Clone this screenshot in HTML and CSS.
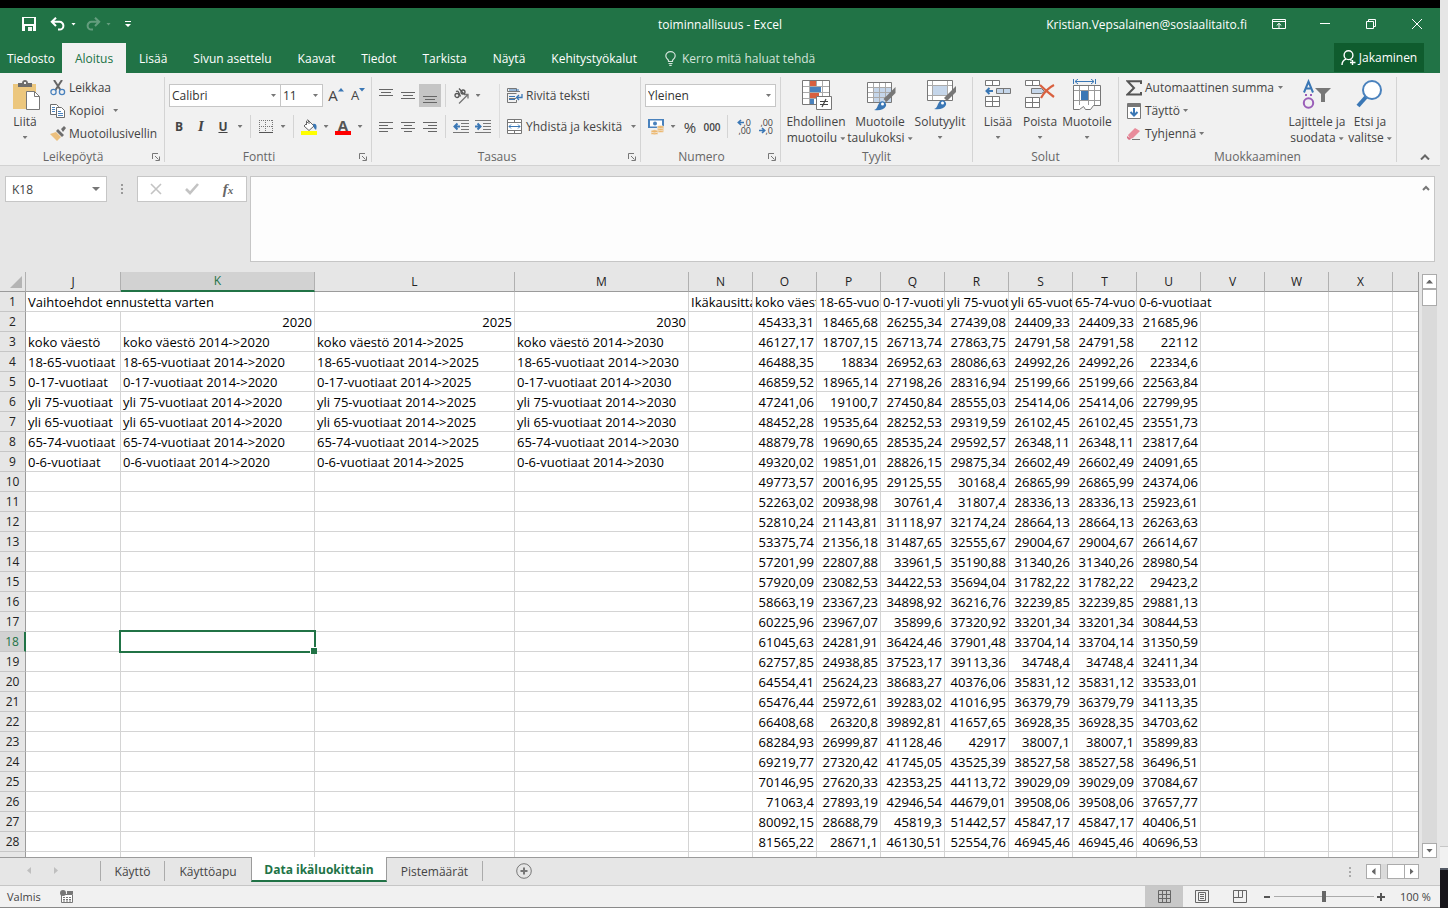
FILE: index.html
```html
<!DOCTYPE html>
<html lang="fi">
<head>
<meta charset="utf-8">
<title>toiminnallisuus - Excel</title>
<link rel="stylesheet" href="styles.css">
</head>
<body>
<div class="desktop">
<div class="app">
  <header class="titlebar">
    <div class="quick">
      <button class="qbtn" aria-label="Tallenna"><svg width="14" height="14" viewBox="0 0 14 14" shape-rendering="crispEdges"><path d="M0 0h14v14H0z" fill="#fff"/><path d="M2 1h10v6H2zM3 9h8v5H3z" fill="#217346"/><path d="M4 11h2v2H4zM6 10h4v4H6z" fill="#fff" opacity=".95"/><path d="M4 11h2v2H4z" fill="#217346"/></svg></button>
      <button class="qbtn" aria-label="Kumoa"><svg width="16" height="14" viewBox="0 0 16 14" fill="none" stroke="#fff" stroke-width="2"><path d="M6 .7L1.8 4.8 6 9M2 4.8h7.500a3.900 3.900 0 0 1 0 7.800H8"/></svg></button><span class="caret light"></span>
      <button class="qbtn dim" aria-label="Tee uudelleen"><svg width="16" height="14" viewBox="0 0 16 14" fill="none" stroke="#fff" stroke-width="2"><path d="M10 .7l4.200 4.100L10 9M14 4.800H6.500a3.900 3.900 0 0 0 0 7.800H8"/></svg></button><span class="caret light dim"></span>
      <button class="qbtn custom" aria-label="Mukauta"><svg width="6" height="6" viewBox="0 0 6 6"><path d="M0 0h6v1H0zM0 3h6L3 6z" fill="#fff"/></svg></button>
    </div>
    <h1 class="title">toiminnallisuus - Excel</h1>
    <div class="account">
      <span class="user">Kristian.Vepsalainen@sosiaalitaito.fi</span>
      <button class="winbtn" aria-label="Valintanauhan asetukset"><svg width="14" height="11" viewBox="0 0 14 11" fill="none" stroke="#fff"><path d="M.5.500h13v9H.500zM1 2.500h12M7 9V4.500M4.700 6.500L7 4.300l2.300 2.200"/></svg></button>
      <button class="winbtn" aria-label="Pienennä"><svg width="10" height="10" viewBox="0 0 10 10" stroke="#fff"><path d="M0 4.500h10"/></svg></button>
      <button class="winbtn" aria-label="Palauta"><svg width="10" height="10" viewBox="0 0 10 10" fill="none" stroke="#fff"><path d="M.5 2.500h7v7h-7zM2.500 2V.500h7v7H8"/></svg></button>
      <button class="winbtn" aria-label="Sulje"><svg width="10" height="10" viewBox="0 0 10 10" stroke="#fff"><path d="M0 0l10 10M10 0L0 10"/></svg></button>
    </div>
  </header>

  <nav class="tabs">
    <button class="tab file">Tiedosto</button>
    <button class="tab active">Aloitus</button>
    <button class="tab">Lisää</button>
    <button class="tab">Sivun asettelu</button>
    <button class="tab">Kaavat</button>
    <button class="tab">Tiedot</button>
    <button class="tab">Tarkista</button>
    <button class="tab">Näytä</button>
    <button class="tab">Kehitystyökalut</button>
    <button class="tab tell"><svg width="11" height="15" viewBox="0 0 11 15" fill="none" stroke="#d3e3da" stroke-width="1.200"><path d="M3.500 10.500V9.300C2 8 .8 7 .8 4.900a4.700 4.300 0 0 1 9.400 0C10.200 7 9 8 7.500 9.300v1.200zM3.500 12.500h4M4.300 14.300h2.400"/></svg>Kerro mitä haluat tehdä</button>
    <button class="share"><svg width="15" height="16" viewBox="0 0 15 16" fill="none" stroke="#fff" stroke-width="1.400"><circle cx="7.500" cy="5.200" r="4.400"/><path d="M1 15c0-3 1.500-4.800 4-5.800M9 9.300l1.500 1M11.500 10v5M9 12.500h5.500"/></svg>Jakaminen</button>
  </nav>

  <section class="ribbon">
    <div class="group g-clip">
      <div class="gbody">
        <button class="big paste"><svg class="bigicon" width="32" height="32" viewBox="0 0 32 32"><path d="M4 5h23v25H4z" fill="#ecc77e"/><path d="M9 8V4h4c0-4 6-4 6 0h4v4z" fill="#6d6d6d"/><path d="M15 3h2v2h-2z" fill="#f1f1f1"/><path d="M17.500 12.500h8l5 5v13h-13z" fill="#fff" stroke="#777"/><path d="M25.500 12.500v5h5" fill="none" stroke="#777"/></svg><span>Liitä</span><i class="caret"></i></button>
        <div class="list">
          <button class="item"><svg width="16" height="16" viewBox="0 0 16 16" fill="none"><path d="M4 0l6.500 10M12 0L5.500 10" stroke="#666" stroke-width="2"/><circle cx="3.500" cy="12" r="2.600" stroke="#4a82bd" stroke-width="1.300"/><circle cx="12" cy="12" r="2.600" stroke="#4a82bd" stroke-width="1.300"/></svg>Leikkaa</button>
          <button class="item"><svg width="16" height="16" viewBox="0 0 16 16" fill="#fff" stroke="#6d6d6d"><path d="M.5 1.500h6l2 2v8h-8z"/><path d="M6.500 4.500h5l3 3v7h-8z"/><path d="M2 4.500h3M2 6.500h3M2 8.500h3M8 8.500h3M8 10.500h5M8 12.500h5" stroke="#4a82bd"/></svg>Kopioi <i class="caret push"></i></button>
          <button class="item"><svg width="16" height="16" viewBox="0 0 16 16"><path d="M0 8l6-2 5 5-4 4z" fill="#ecc07e"/><path d="M6 5l2-2 6 6-2 2zM11 3l3-3 2 2-3 4z" fill="#6d6d6d"/></svg>Muotoilusivellin</button>
        </div>
      </div>
      <div class="glabel">Leikepöytä<button class="launch" aria-label="Leikepöydän asetukset"><svg width="8" height="8" viewBox="0 0 8 8" fill="none" stroke="#777"><path d="M.500 6V.500H6M3 3l3.500 3.500M7.500 3.500v4h-4"/></svg></button></div>
    </div>

    <div class="group g-font">
      <div class="gbody tools">
        <div class="row">
          <label class="combo face"><select aria-label="Fontti"><option>Calibri</option></select><i class="caret"></i></label><label class="combo size"><select aria-label="Fonttikoko"><option>11</option></select><i class="caret"></i></label>
          <button class="ib grow" aria-label="Suurenna fonttia"><span class="fa">A</span><svg width="6" height="4" viewBox="0 0 6 4"><path d="M0 3.500L3 0l3 3.500z" fill="#3a77b5"/></svg></button>
          <button class="ib grow small" aria-label="Pienennä fonttia"><span class="fa">A</span><svg width="6" height="4" viewBox="0 0 6 4"><path d="M0 0h6L3 3.500z" fill="#3a77b5"/></svg></button>
        </div>
        <div class="row start">
          <button class="ib b">B</button><button class="ib i">I</button><button class="ib u">U</button><i class="cw"><i class="caret"></i></i><i class="vs"></i>
          <button class="ib" aria-label="Reunat"><svg width="14" height="14" viewBox="0 0 14 14" fill="none" stroke="#777" shape-rendering="crispEdges"><path d="M0 .500h14M0 6.500h14M.500 0v12M6.500 0v12M13.500 0v12" stroke-dasharray="1 1"/><path d="M0 12.500h14" stroke-width="1" stroke="#555"/></svg></button><i class="cw"><i class="caret"></i></i><i class="vs"></i>
          <button class="ib" aria-label="Täyttöväri"><svg width="16" height="16" viewBox="0 0 16 16"><path d="M3 7l5-5 5 5-5 4.500z" fill="#fff" stroke="#666"/><path d="M5.500 6V2q1.500-2.500 2.500 0v3" fill="none" stroke="#666"/><path d="M12 5c4-1 4 3 3 6l-2-2z" fill="#3a77b5"/><path d="M0 12h16v4H0z" fill="#ff0"/></svg></button><i class="cw"><i class="caret"></i></i>
          <button class="ib fc">A</button><i class="cw"><i class="caret"></i></i>
        </div>
      </div>
      <div class="glabel">Fontti<button class="launch" aria-label="Fontin asetukset"><svg width="8" height="8" viewBox="0 0 8 8" fill="none" stroke="#777"><path d="M.500 6V.500H6M3 3l3.500 3.500M7.500 3.500v4h-4"/></svg></button></div>
    </div>

    <div class="group g-align">
      <div class="gbody tools">
        <div class="cols">
          <div class="stack">
            <div class="row start">
              <button class="ib" aria-label="Tasaa ylös"><svg width="14" height="14" viewBox="0 0 14 14" stroke="#666"><path d="M0 .500h14M2 3.500h10M0 6.500h14"/></svg></button>
              <button class="ib" aria-label="Keskitä pystysuunnassa"><svg width="14" height="14" viewBox="0 0 14 14" stroke="#666"><path d="M0 3.500h14M2 6.500h10M0 9.500h14"/></svg></button>
              <button class="ib on" aria-label="Tasaa alas"><svg width="14" height="14" viewBox="0 0 14 14" stroke="#666"><path d="M0 7.500h14M2 10.500h10M0 13.500h14"/></svg></button>
              <i class="vs"></i>
              <button class="ib" aria-label="Suunta"><svg width="16" height="16" viewBox="0 0 16 16" fill="none" stroke="#555" stroke-width="1.300"><path d="M6 15.500L14.500 7M11 6.500h4V10.500" stroke="#777"/><circle cx="4" cy="7.500" r="2"/><path d="M3 3.500q1.500-1 2.500.5l2 4.500"/><path d="M6 .5l4.500 5"/><circle cx="10" cy="4" r="2"/></svg></button><i class="cw"><i class="caret"></i></i>
            </div>
            <div class="row start">
              <button class="ib" aria-label="Tasaa vasemmalle"><svg width="14" height="12" viewBox="0 0 14 12" stroke="#666"><path d="M0 1.500h14M0 4.500h9M0 7.500h14M0 10.500h9"/></svg></button>
              <button class="ib" aria-label="Keskitä"><svg width="14" height="12" viewBox="0 0 14 12" stroke="#666"><path d="M0 1.500h14M3 4.500h8M0 7.500h14M3 10.500h8"/></svg></button>
              <button class="ib" aria-label="Tasaa oikealle"><svg width="14" height="12" viewBox="0 0 14 12" stroke="#666"><path d="M0 1.500h14M5 4.500h9M0 7.500h14M5 10.500h9"/></svg></button>
              <i class="vs"></i>
              <button class="ib" aria-label="Pienennä sisennystä"><svg width="16" height="13" viewBox="0 0 16 13"><path d="M0 .500h16M8 3.500h8M8 6.500h8M8 9.500h8M0 12.500h16" stroke="#777"/><path d="M7 6.500H2M4.500 3.500l-3 3 3 3" stroke="#3a77b5" stroke-width="2" fill="none"/></svg></button>
              <button class="ib" aria-label="Suurenna sisennystä"><svg width="16" height="13" viewBox="0 0 16 13"><path d="M0 .500h16M8 3.500h8M8 6.500h8M8 9.500h8M0 12.500h16" stroke="#777"/><path d="M0 6.500h5M2.500 3.500l3 3-3 3" stroke="#3a77b5" stroke-width="2" fill="none"/></svg></button>
            </div>
          </div>
          <div class="stack wide">
            <button class="item"><svg width="16" height="16" viewBox="0 0 16 16" fill="none" stroke="#777"><path d="M.5.500h9v3h-9zM.500 5.500h9M.500 5v9.500h9V12M2 8.500h5M2 10.500h7M9 3.500h4"/><path d="M2 2h10M2 8.500h6M2 11.500h6" stroke="#3a77b5"/><path d="M15 6v3.500h-5M12 7l-2.500 2.500L12 12" stroke="#3a77b5" stroke-width="1.300"/></svg>Rivitä teksti</button>
            <button class="item"><svg width="16" height="15" viewBox="0 0 16 15" fill="none" stroke="#777"><path d="M.5.500h14v14H.500zM0 3.500h15M0 11.500h15M7.500 0v3.500M7.500 11.500V15" fill="#fff"/><path d="M2 7.500h11M4 5.500l-2 2 2 2M11 5.500l2 2-2 2" stroke="#3a77b5"/></svg>Yhdistä ja keskitä<i class="caret push"></i></button>
          </div>
        </div>
      </div>
      <div class="glabel">Tasaus<button class="launch" aria-label="Tasauksen asetukset"><svg width="8" height="8" viewBox="0 0 8 8" fill="none" stroke="#777"><path d="M.500 6V.500H6M3 3l3.500 3.500M7.500 3.500v4h-4"/></svg></button></div>
    </div>

    <div class="group g-num">
      <div class="gbody tools">
        <div class="row"><label class="combo fmt"><select aria-label="Lukumuoto"><option>Yleinen</option></select><i class="caret"></i></label></div>
        <div class="row">
          <button class="ib" aria-label="Valuutta"><svg width="16" height="16" viewBox="0 0 16 16"><path d="M0 0h16v9H0z" fill="#4a82bd"/><path d="M2 1.500h12v6H2z" fill="#fff"/><circle cx="7" cy="4.500" r="2" fill="#4a82bd"/><g fill="#ecb76e" stroke="#f1f1f1" stroke-width=".6"><ellipse cx="12.500" cy="12" rx="3.500" ry="1.500"/><ellipse cx="12.500" cy="10" rx="3.500" ry="1.500"/><ellipse cx="12.500" cy="8" rx="3.500" ry="1.500"/><ellipse cx="6.500" cy="14.300" rx="3.500" ry="1.500"/><ellipse cx="6.500" cy="12.300" rx="3.500" ry="1.500"/></g></svg></button><i class="cw"><i class="caret"></i></i>
          <button class="ib pct">%</button><button class="ib thou">000</button><i class="vs"></i>
          <button class="ib dec" aria-label="Lisää desimaaleja"><span class="top"><svg width="7" height="7" viewBox="0 0 7 7"><path d="M7 3.500H1M4 1L1.300 3.500 4 6" stroke="#3a77b5" stroke-width="1.600" fill="none"/></svg>,0</span><span>,00</span></button>
          <button class="ib dec" aria-label="Vähennä desimaaleja"><span>,00</span><span class="top"><svg width="7" height="7" viewBox="0 0 7 7"><path d="M0 3.500h6M3 1l2.700 2.500L3 6" stroke="#3a77b5" stroke-width="1.600" fill="none"/></svg>,0</span></button>
        </div>
      </div>
      <div class="glabel">Numero<button class="launch" aria-label="Numeron asetukset"><svg width="8" height="8" viewBox="0 0 8 8" fill="none" stroke="#777"><path d="M.500 6V.500H6M3 3l3.500 3.500M7.500 3.500v4h-4"/></svg></button></div>
    </div>

    <div class="group g-styles">
      <div class="gbody">
        <button class="big w64"><svg class="bigicon" width="32" height="32" viewBox="0 0 32 32"><path d="M2.500 1.500h27v24h-27z" fill="#fff"/><path d="M10 2h6v6h-6zM10 14h9v6h-9z" fill="#d9603f"/><path d="M10 8h11v6H10zM10 20h4v5h-4z" fill="#4a82bd"/><path d="M9.500 2v23M22.500 2v23M16.500 2v5M3 7.500h26M3 13.500h26M3 19.500h26" stroke="#aaa" fill="none"/><path d="M2.500 1.500h27v24h-27z" fill="none" stroke="#777"/><path d="M16.500 17.500h15v13h-15z" fill="#fff" stroke="#777"/><path d="M20 22.500h8M20 25.500h8M26 20l-4 8" stroke="#444" stroke-width="1.200"/></svg><span>Ehdollinen<br>muotoilu <i class="caret"></i></span></button>
        <button class="big w64"><svg class="bigicon" width="32" height="32" viewBox="0 0 32 32"><path d="M3.500 3.500h24v20h-24z" fill="#fff"/><path d="M10 9h17v15H10z" fill="#c5d6ea"/><path d="M9.500 4v19M15.500 4v19M21.500 4v19M4 8.500h23M4 13.500h23M4 18.500h23" stroke="#aaa" fill="none"/><path d="M3.500 3.500h24v20h-24z" fill="none" stroke="#777"/><path d="M31.500 8v6l-9 9-3-3z" fill="#777"/><path d="M10 31c4-1 3-5 6-8 3-2 7 1 6 4-2 4-7 5-12 4z" fill="#3a77b5"/><circle cx="18.500" cy="25" r="1.500" fill="#fff"/></svg><span>Muotoile<br>taulukoksi <i class="caret"></i></span></button>
        <button class="big w56"><svg class="bigicon" width="32" height="32" viewBox="0 0 32 32"><path d="M3.500 1.500h25v20h-25z" fill="#fff"/><path d="M9 7h14v10H9z" fill="#c5d6ea"/><path d="M8.500 2v19M23.500 2v19M4 6.500h24M4 16.500h24" stroke="#aaa" fill="none"/><path d="M3.500 1.500h25v20h-25z" fill="none" stroke="#777"/><path d="M32 7v6l-9 9-3-3z" fill="#777"/><path d="M10 30c4-1 3-5 6-8 3-2 7 1 6 4-2 4-7 5-12 4z" fill="#3a77b5"/><circle cx="18.500" cy="24" r="1.500" fill="#fff"/></svg><span>Solutyylit</span><i class="caret"></i></button>
      </div>
      <div class="glabel">Tyylit</div>
    </div>

    <div class="group g-cells">
      <div class="gbody">
        <button class="big w42"><svg class="bigicon" width="28" height="32" viewBox="0 0 28 32"><g fill="#fff" stroke="#777"><path d="M1.500 1.500h14v5h-14zM8.500 1.500v5M1.500 17.500h14v10h-14zM8.500 17.500v10M1.500 22.500h14"/><path d="M12.500 9.500h14v5h-14zM19.500 9.500v5" fill="#c5d6ea"/></g><path d="M9 12H3M5.500 9l-3 3 3 3" stroke="#3a77b5" stroke-width="2" fill="none"/></svg><span>Lisää</span><i class="caret"></i></button>
        <button class="big w42"><svg class="bigicon" width="30" height="32" viewBox="0 0 30 32"><g fill="#fff" stroke="#777"><path d="M.500 1.500h14v5H.500zM7.500 1.500v5M.500 18.500h14v10H.500zM7.500 18.500v10M.500 23.500h14"/><path d="M6.500 9.500h10l3 3-3 2h-10z" fill="#c5d6ea"/></g><path d="M15 6q6 6 14 12M29 6q-8 4-13 13" stroke="#d9603f" stroke-width="2.200" fill="none"/></svg><span>Poista</span><i class="caret"></i></button>
        <button class="big w52"><svg class="bigicon" width="30" height="32" viewBox="0 0 30 32"><path d="M1.500 0v5M23.500 0v5M3 2.500h19M6 0L3 2.500 6 5M19 0l3 2.500L19 5" stroke="#3a77b5" fill="none"/><path d="M1.500 6.500h27v20h-7l-3 4h-5l-2-3-4 3h-6z" fill="#fff" stroke="#777"/><path d="M7.500 7v19M16.500 7v19M22.500 7v19M2 11.500h26M2 21.500h26" stroke="#999" fill="none"/><path d="M9 12h7v9H9z" fill="#3a77b5"/></svg><span>Muotoile</span><i class="caret"></i></button>
      </div>
      <div class="glabel">Solut</div>
    </div>

    <div class="group g-edit">
      <div class="gbody">
        <div class="list sums">
          <button class="item"><svg width="16" height="16" viewBox="0 0 16 16"><path d="M15 4V1.200H1.500L8 8l-6.500 6.500H15V12" fill="none" stroke="#555" stroke-width="2"/></svg>Automaattinen summa<i class="caret push"></i></button>
          <button class="item"><svg width="16" height="16" viewBox="0 0 16 16"><path d="M1.500.500h13v15h-13z" fill="#fff" stroke="#777"/><path d="M2 1h12v3H2z" fill="#777"/><path d="M8 5v7M4.500 9L8 12.500 11.500 9" stroke="#3a77b5" stroke-width="2" fill="none"/></svg>Täyttö <i class="caret"></i></button>
          <button class="item"><svg width="16" height="16" viewBox="0 0 16 16"><path d="M2 9l7-7 5 3-7 7-3 1z" fill="#e88b9b"/><path d="M1 10l4 3-2 1-2-2z" fill="#d97086"/><path d="M6 13.500h8" stroke="#777"/></svg>Tyhjennä <i class="caret"></i></button>
        </div>
        <button class="big w56"><svg class="bigicon" width="32" height="32" viewBox="0 0 32 32"><g fill="none" stroke-width="2"><path d="M3 13.500L7.500 2.500 12 13.500M4.500 9.500h6" stroke="#3a77b5"/><circle cx="7.500" cy="24" r="4.700" stroke="#9a5fb8"/></g><path d="M4 15h2v2H4zM9 15h2v2H9z" fill="#9a5fb8"/><path d="M14 9h16l-6 6v8h-4v-8z" fill="#777"/></svg><span>Lajittele ja<br>suodata <i class="caret"></i></span></button>
        <button class="big w50"><svg class="bigicon" width="32" height="32" viewBox="0 0 32 32"><path d="M12 18L4 27" stroke="#3a77b5" stroke-width="4"/><circle cx="18" cy="11" r="9" fill="#fff" stroke="#4a82bd" stroke-width="2"/></svg><span>Etsi ja<br>valitse <i class="caret"></i></span></button>
      </div>
      <div class="glabel">Muokkaaminen</div>
    </div>
    <button class="collapse" aria-label="Kutista valintanauha"><svg width="10" height="6" viewBox="0 0 10 6"><path d="M1 5.500l4-4 4 4" stroke="#666" stroke-width="2" fill="none"/></svg></button>
  </section>

  <section class="formula">
    <div class="namebox"><input aria-label="Nimiruutu" value="K18"><i class="caret large"></i></div>
    <svg class="dots" width="2" height="10" viewBox="0 0 2 10" fill="#999"><path d="M0 0h2v2H0zM0 4h2v2H0zM0 8h2v2H0z"/></svg>
    <div class="fxbox">
      <button aria-label="Peruuta"><svg width="12" height="12" viewBox="0 0 12 12" stroke="#c3c3c3" stroke-width="1.600"><path d="M1 1l10 10M11 1L1 11"/></svg></button>
      <button aria-label="Hyväksy"><svg width="14" height="12" viewBox="0 0 14 12" stroke="#c3c3c3" stroke-width="2.600" fill="none"><path d="M1 6l4 4 8-9"/></svg></button>
      <button class="fx" aria-label="Lisää funktio">f<small>x</small></button>
    </div>
    <div class="fbar"><textarea aria-label="Kaavarivi"></textarea><svg width="8" height="6" viewBox="0 0 8 6"><path d="M1 5l3-3 3 3" stroke="#777" stroke-width="2" fill="none"/></svg></div>
  </section>

  <main class="sheet">
    <div class="gridwrap"><table class="grid" id="grid"></table></div>
    <div class="vscroll">
      <button class="sb" aria-label="Vieritä ylös"><i class="tri up"></i></button>
      <div class="thumb"></div>
      <div class="track"></div>
      <button class="sb" aria-label="Vieritä alas"><i class="tri down"></i></button>
    </div>
  </main>

  <footer class="bottom">
    <div class="sheettabs">
      <div class="arrows"><i class="tri left dim"></i><i class="tri right dim"></i></div>
      <button class="stab">Käyttö</button>
      <button class="stab second">Käyttöapu</button>
      <button class="stab current">Data ikäluokittain</button>
      <button class="stab last">Pistemäärät</button>
      <button class="add" aria-label="Uusi taulukko"><svg width="16" height="16" viewBox="0 0 16 16" fill="none" stroke="#777"><circle cx="8" cy="8" r="7.300"/><path d="M8 4.500v7M4.500 8h7" stroke-width="2"/></svg></button>
      <div class="hscroll">
        <svg class="hdots" width="2" height="10" viewBox="0 0 2 10" fill="#aaa"><path d="M0 0h2v2H0zM0 4h2v2H0zM0 8h2v2H0z"/></svg>
        <button class="sb" aria-label="Vieritä vasemmalle"><i class="tri left"></i></button>
        <div class="htrack"></div><div class="hthumb"></div>
        <button class="sb" aria-label="Vieritä oikealle"><i class="tri right"></i></button>
      </div>
    </div>
    <div class="status">
      <span class="ready">Valmis</span>
      <button class="macro" aria-label="Tallenna makro"><svg width="13" height="13" viewBox="0 0 13 13"><path d="M1.500 4.500h11v8h-11z" fill="#fff" stroke="#777"/><path d="M7 1h6v3H7z" fill="#777"/><circle cx="3" cy="3" r="3" fill="#777"/><path d="M3 7.500h8M3 9.500h8M3 11h8" stroke="#777" stroke-dasharray="2 1"/></svg></button>
      <div class="views">
        <button class="view on" aria-label="Normaali"><svg width="13" height="13" viewBox="0 0 13 13" fill="none" stroke="#666"><path d="M.500.500h12v12H.500zM4.500 0v13M8.500 0v13M0 4.500h13M0 8.500h13"/></svg></button>
        <button class="view" aria-label="Sivun asettelu"><svg width="14" height="13" viewBox="0 0 14 13" fill="none" stroke="#666"><path d="M.500.500h13v12H.500zM3.500 2.500h7v8h-7zM5 4.500h4M5 6.500h4M5 8.500h4"/></svg></button>
        <button class="view" aria-label="Sivunvaihdot"><svg width="14" height="13" viewBox="0 0 14 13" fill="none" stroke="#666"><path d="M.500.500h13v12H.500zM5.500 0v7.500M9.500 0v7.500M0 7.500h9.500"/></svg></button>
      </div>
      <button class="zoom" aria-label="Loitonna"><svg width="6" height="8" viewBox="0 0 6 8"><path d="M0 4h6" stroke="#555" stroke-width="2"/></svg></button>
      <input class="slider" type="range" min="0" max="100" value="50" aria-label="Zoomaus">
      <button class="zoom" aria-label="Lähennä"><svg width="8" height="8" viewBox="0 0 8 8"><path d="M0 4h8M4 0v8" stroke="#555" stroke-width="2"/></svg></button>
      <span class="pct100">100 %</span>
    </div>
  </footer>
</div>
<aside class="edge"><div class="edge-top"></div><div class="edge-mid"></div><div class="edge-low"></div></aside>
</div>
<script src="script.js"></script>
</body>
</html>
```
FILE: styles.css
```css
* { box-sizing: border-box; }
body { margin: 0; font-family: "Open Sans", "Noto Sans", sans-serif; font-size: 12px; color: #444; background: #e6e6e6; }
button, input, select, textarea { font: inherit; color: inherit; border: 0; background: none; padding: 0; margin: 0; border-radius: 0; }
svg { display: block; flex: none; }
i { font-style: normal; }

.desktop { display: flex; height: 100vh; overflow: hidden; }
.app { flex: 1; min-width: 0; display: flex; flex-direction: column; border-top: 8px solid #000; }
.edge { flex: 0 0 8px; display: flex; flex-direction: column; }
.edge-top { flex: 1; }
.edge-mid { height: 22px; background: #f1f1f1; border-top: 1px solid #c6c6c6; }
.edge-low { height: 40px; background: #17151a; border-top: 2px solid #555b66; }

.caret { display: inline-block; flex: none; width: 5px; height: 3px; background: #777; clip-path: polygon(0 0, 100% 0, 50% 100%); vertical-align: middle; }
.caret.light { background: #fff; }
.caret.large { width: 8px; height: 4px; }
.dim { opacity: .3; }
.push { margin-left: auto; }

/* Title bar */
.titlebar { display: grid; grid-template-columns: 1fr auto 1fr; align-items: center; height: 35px; flex: none; background: #217346; color: #fff; padding-bottom: 3px; }
.quick { display: flex; align-items: center; padding-left: 22px; }
.qbtn { width: 14px; display: grid; place-items: center; }
.qbtn + .qbtn { margin-left: 14px; width: 16px; }
.quick .caret { margin-left: 5px; }
.quick .caret + .qbtn { width: 16px; margin-left: 9px; }
.quick .caret + .custom { width: 10px; margin-left: 12px; }
.title { margin: 0; font-size: 12px; font-weight: 400; }
.account { display: flex; justify-content: flex-end; align-items: center; }
.user { margin-right: 9px; }
.winbtn { width: 46px; height: 32px; display: grid; place-items: center; }

/* Ribbon tabs */
.tabs { display: flex; height: 30px; flex: none; background: #217346; padding-right: 16px; }
.tab { color: #fff; padding: 0 13px; white-space: nowrap; }
.tab.file { width: 62px; padding: 0; }
.tab.active { background: #f1f1f1; color: #217346; width: 64px; padding: 0; }
.tab.tell { display: flex; align-items: center; gap: 6px; color: #d3e3da; padding-left: 15px; }
.share { margin-left: auto; width: 90px; height: 29px; background: #0f5c2e; color: #fff; display: flex; align-items: center; justify-content: center; gap: 3px; }

/* Ribbon */
.ribbon { display: flex; height: 93px; flex: none; background: #f1f1f1; border-bottom: 1px solid #d2d2d2; padding: 4px 0 3px; position: relative; }
.group { flex: none; display: flex; flex-direction: column; border-right: 1px solid #d4d4d4; }
.gbody { flex: 1; display: flex; align-items: flex-start; }
.glabel { height: 15px; line-height: 15px; margin-bottom: -2px; text-align: center; position: relative; color: #666; padding-right: 18px; }
.launch { position: absolute; right: 4px; top: 4px; }
.g-clip { width: 165px; }
.g-font { width: 207px; }
.g-align { width: 269px; }
.g-num { width: 140px; }
.g-styles { width: 192px; }
.g-cells { width: 146px; }
.g-edit { width: 278px; }
.g-styles .glabel, .g-cells .glabel, .g-edit .glabel { padding-right: 0; }
.g-styles .gbody { padding-left: 3px; }
.g-cells .gbody { padding-left: 4px; }

.big { display: flex; flex-direction: column; align-items: center; line-height: 16px; padding-top: 2px; }
.big span { white-space: nowrap; }
.big > .caret { margin-top: 6px; }
.bigicon { margin-bottom: 3px; }
.paste { width: 50px; }
.w42 { width: 42px; }
.w50 { width: 50px; }
.w52 { width: 52px; }
.w56 { width: 56px; }
.w64 { width: 64px; }
.list { display: flex; flex-direction: column; flex: 1; margin-top: -1px; }
.item { display: flex; align-items: center; gap: 3px; height: 23px; white-space: nowrap; }
.g-clip .item .push { margin-left: 6px; }
.list.sums { flex: 0 0 170px; padding-left: 7px; }
.list.sums .item .push { margin-right: 6px; }

.tools { flex-direction: column; padding: 7px 4px 0; gap: 8px; }
.tools .row { display: flex; align-items: center; height: 23px; }
.start { margin-left: -1px; }
.ib { flex: none; width: 22px; height: 23px; display: grid; place-items: center; }
.ib.on { background: #c5c5c5; }
.cw { flex: none; width: 12px; display: grid; place-items: center; }
.vs { flex: none; width: 1px; height: 23px; background: #d4d4d4; margin: 0 4px; }
.combo { position: relative; display: flex; height: 23px; background: #fff; border: 1px solid #c6c6c6; color: #333; }
.combo select { appearance: none; width: 100%; padding: 0 2px; }
.combo .caret { position: absolute; right: 4px; top: 9px; }
.face { width: 111px; border-right: 0; }
.size { width: 43px; }
.fmt { width: 131px; }
.grow { display: flex; align-items: flex-start; justify-content: center; font-size: 15px; line-height: 23px; }
.row .size + .grow { margin-left: 2px; }
.grow svg { margin-top: 4px; }
.grow.small { font-size: 13px; }
.b, .i, .u { font-size: 12px; font-weight: 700; }
.i { font-style: italic; font-family: "Liberation Serif", serif; font-size: 15px; }
.u { text-decoration: underline; }
.fc { font-size: 15px; font-weight: 700; line-height: 15px; color: #555; border-bottom: 4px solid #f00; width: 16px; height: 17px; margin: 0 3px; }
.cols { display: flex; align-self: stretch; }
.stack { display: flex; flex-direction: column; gap: 8px; }
.stack.wide { flex: 1; border-left: 1px solid #dcdcdc; padding-left: 7px; }
.cols .stack:first-child { flex: none; width: 123px; }
.pct { font-size: 15px; }
.thou { font-size: 10px; font-weight: 600; }
.dec { align-content: center; justify-items: end; font-size: 9px; line-height: 8px; padding-right: 3px; }
.dec .top { display: flex; }
.collapse { position: absolute; right: 10px; bottom: 5px; }

/* Formula bar */
.formula { display: flex; align-items: flex-start; height: 106px; flex: none; padding: 10px 5px; background: #e6e6e6; }
.namebox { display: flex; align-items: center; width: 102px; height: 26px; background: #fff; border: 1px solid #c6c6c6; padding: 0 6px; }
.namebox input { flex: 1; min-width: 0; }
.dots { margin: 8px 14px 0; }
.fxbox { display: grid; grid-template-columns: repeat(3, 36px); width: 110px; height: 26px; background: #fff; border: 1px solid #c6c6c6; }
.fxbox button { display: grid; place-items: center; }
.fxbox .fx { display: block; font: italic 700 15px "Liberation Serif", serif; color: #666; }
.fx small { font-size: 11px; }
.fbar { flex: 1; height: 86px; margin-left: 3px; background: #fdfdfd; border: 1px solid #c6c6c6; display: flex; padding-right: 4px; }
.fbar textarea { flex: 1; resize: none; }
.fbar svg { margin-top: 8px; }

/* Worksheet */
.sheet { flex: 1; min-height: 0; display: flex; }
.gridwrap { flex: 1; min-width: 0; overflow: hidden; border-right: 1px solid #9b9b9b; border-bottom: 1px solid #9b9b9b; }
.grid { table-layout: fixed; width: 100%; border-spacing: 0; color: #000; background: #fff; font-size: 13px; line-height: 18px; }
.grid th, .grid td { height: 20px; padding: 1px 2px 0; border-right: 1px solid #d4d4d4; border-bottom: 1px solid #d4d4d4; white-space: nowrap; overflow: hidden; text-align: left; font-weight: 400; }
.grid td:last-child { border-right: 0; }
.grid td.n { text-align: right; }
.grid thead th { background: #e6e6e6; text-align: center; font-size: 12px; padding-top: 0; border-bottom-color: #9b9b9b; border-right-color: #b0b0b0; color: #222; }
.grid thead th:last-child { border-right: 0; }
.grid tbody th { background: #e6e6e6; text-align: center; border-right-color: #9b9b9b; border-bottom-color: #c6c6c6; font-size: 12px; color: #222; }
.grid thead th.sel { background: #d2d2d2; color: #217346; border-bottom: 2px solid #217346; }
.grid tbody th.sel { background: #d2d2d2; color: #217346; border-right: 2px solid #217346; }
.corner svg { margin: 2px 0 0 7px; }
.grid td.cursor { position: relative; overflow: visible; }
.cursor::before { content: ""; position: absolute; inset: -2px; border: 2px solid #217346; }
.cursor::after { content: ""; position: absolute; right: -3px; bottom: -3px; width: 6px; height: 6px; background: #217346; border: solid #fff; border-width: 1px 0 0 1px; }
.c-head { width: 26px; } .c-j { width: 95px; } .c-k { width: 194px; } .c-l { width: 200px; } .c-m { width: 174px; } .c-std { width: 64px; }

.vscroll { width: 15px; margin: 2px 3px 0 3px; display: flex; flex-direction: column; }
.sb { width: 15px; height: 15px; flex: none; display: grid; place-items: center; background: #fff; border: 1px solid #ababab; }
.thumb { height: 17px; background: #fff; border: 1px solid #ababab; }
.track { flex: 1; background: #dadada; }
.tri { width: 7px; height: 4px; background: #666; }
.tri.up { clip-path: polygon(50% 0, 100% 100%, 0 100%); }
.tri.down { clip-path: polygon(0 0, 100% 0, 50% 100%); }
.tri.left { width: 4px; height: 7px; clip-path: polygon(100% 0, 100% 100%, 0 50%); }
.tri.right { width: 4px; height: 7px; clip-path: polygon(0 0, 100% 50%, 0 100%); }

/* Sheet tabs and status bar */
.sheettabs { display: flex; height: 28px; background: #e6e6e6; border-bottom: 1px solid #c6c6c6; }
.arrows { width: 100px; display: flex; gap: 23px; padding: 9px 0 0 27px; }
.stab { width: 64px; height: 20px; margin-top: 3px; border-left: 1px solid #ababab; }
.stab.second { width: 87px; }
.stab.current { width: 136px; height: 25px; margin-top: -1px; padding-top: 2px; background: #fff; color: #217346; font-weight: 700; border-left: 1px solid #9b9b9b; border-right: 1px solid #9b9b9b; border-bottom: 2px solid #217346; position: relative; }
.stab.last { width: 96px; border-left: 0; border-right: 1px solid #ababab; }
.add { margin-left: 33px; height: 26px; }
.hscroll { margin-left: auto; display: flex; padding: 6px 21px 0 0; }
.hdots { margin: 3px 15px 0 0; }
.htrack { width: 6px; background: #dadada; height: 15px; }
.hthumb { width: 18px; height: 15px; background: #fff; border: 1px solid #ababab; margin-right: -1px; }
.status { display: flex; align-items: center; height: 22px; background: #f1f1f1; border-bottom: 1px solid #8a8a8a; padding-left: 7px; font-size: 11px; }
.ready { width: 53px; }
.views { margin-left: auto; display: flex; }
.view { width: 38px; height: 21px; display: grid; place-items: center; }
.view.on { background: #c8c8c8; }
.zoom { width: 10px; display: grid; place-items: center; }
.views + .zoom { margin-left: 3px; }
.slider { appearance: none; width: 100px; height: 12px; margin: 0 2px; background: linear-gradient(#ababab, #ababab) center / 100% 1px no-repeat; }
.slider::-webkit-slider-thumb { appearance: none; width: 4px; height: 11px; background: #666; }
.pct100 { width: 54px; padding-left: 14px; white-space: nowrap; }
```
FILE: script.js
```js
const headers = ["J", "K", "L", "M", "N", "O", "P", "Q", "R", "S", "T", "U", "V", "W", "X", ""];
const groups = ["koko väestö", "18-65-vuotiaat", "0-17-vuotiaat", "yli 75-vuotiaat", "yli 65-vuotiaat", "65-74-vuotiaat", "0-6-vuotiaat"];
const years = ["2020", "2025", "2030"];

// Columns O to U, rows 2 to 28
const figures = `45433,31 18465,68 26255,34 27439,08 24409,33 24409,33 21685,96
46127,17 18707,15 26713,74 27863,75 24791,58 24791,58 22112
46488,35 18834 26952,63 28086,63 24992,26 24992,26 22334,6
46859,52 18965,14 27198,26 28316,94 25199,66 25199,66 22563,84
47241,06 19100,7 27450,84 28555,03 25414,06 25414,06 22799,95
48452,28 19535,64 28252,53 29319,59 26102,45 26102,45 23551,73
48879,78 19690,65 28535,24 29592,57 26348,11 26348,11 23817,64
49320,02 19851,01 28826,15 29875,34 26602,49 26602,49 24091,65
49773,57 20016,95 29125,55 30168,4 26865,99 26865,99 24374,06
52263,02 20938,98 30761,4 31807,4 28336,13 28336,13 25923,61
52810,24 21143,81 31118,97 32174,24 28664,13 28664,13 26263,63
53375,74 21356,18 31487,65 32555,67 29004,67 29004,67 26614,67
57201,99 22807,88 33961,5 35190,88 31340,26 31340,26 28980,54
57920,09 23082,53 34422,53 35694,04 31782,22 31782,22 29423,2
58663,19 23367,23 34898,92 36216,76 32239,85 32239,85 29881,13
60225,96 23967,07 35899,6 37320,92 33201,34 33201,34 30844,53
61045,63 24281,91 36424,46 37901,48 33704,14 33704,14 31350,59
62757,85 24938,85 37523,17 39113,36 34748,4 34748,4 32411,34
64554,41 25624,23 38683,27 40376,06 35831,12 35831,12 33533,01
65476,44 25972,61 39283,02 41016,95 36379,79 36379,79 34113,35
66408,68 26320,8 39892,81 41657,65 36928,35 36928,35 34703,62
68284,93 26999,87 41128,46 42917 38007,1 38007,1 35899,83
69219,77 27320,42 41745,05 43525,39 38527,58 38527,58 36496,51
70146,95 27620,33 42353,25 44113,72 39029,09 39029,09 37084,67
71063,4 27893,19 42946,54 44679,01 39508,06 39508,06 37657,77
80092,15 28688,79 45819,3 51442,57 45847,17 45847,17 40406,51
81565,22 28671,1 46130,51 52554,76 46945,46 46945,46 40696,53`.split("\n").map(line => line.split(" "));

const esc = s => s.replace(">", "&gt;");
const td = (text = "", cls = "", span = 1) =>
  `<td${cls ? ` class="${cls}"` : ""}${span > 1 ? ` colspan="${span}"` : ""}>${esc(text)}</td>`;

const widths = ["head", "j", "k", "l", "m", ...Array(11).fill("std")];
let html = "<colgroup>" + widths.map(w => `<col class="c-${w}">`).join("") + "<col></colgroup>";

html += '<thead><tr><th class="corner"><svg width="13" height="13" viewBox="0 0 13 13"><path d="M13 0v12H1z" fill="#b4b4b4"/></svg></th>' +
  headers.map(h => `<th${h === "K" ? ' class="sel"' : ""}>${h}</th>`).join("") + "</tr></thead><tbody>";

html += "<tr><th>1</th>" + td("Vaihtoehdot ennustetta varten", "", 2) + td() + td() + td("Ikäkausittain") +
  groups.slice(0, 6).map(g => td(g)).join("") + td(groups[6], "", 2) + td() + td() + td() + "</tr>";

for (let r = 2; r <= 29; r++) {
  const cells = [];
  const group = groups[r - 3];
  cells.push(td(group));
  years.forEach((y, i) => {
    if (r === 2) cells.push(td(y, "n"));
    else if (group) cells.push(td(`${group} 2014->${y}`));
    else cells.push(td("", r === 18 && i === 0 ? "cursor" : ""));
  });
  cells.push(td());
  const row = figures[r - 2] || Array(7).fill("");
  row.forEach(v => cells.push(td(v, "n")));
  for (let i = 0; i < 4; i++) cells.push(td());
  html += `<tr><th${r === 18 ? ' class="sel"' : ""}>${r}</th>${cells.join("")}</tr>`;
}
document.getElementById("grid").innerHTML = html + "</tbody>";
```
